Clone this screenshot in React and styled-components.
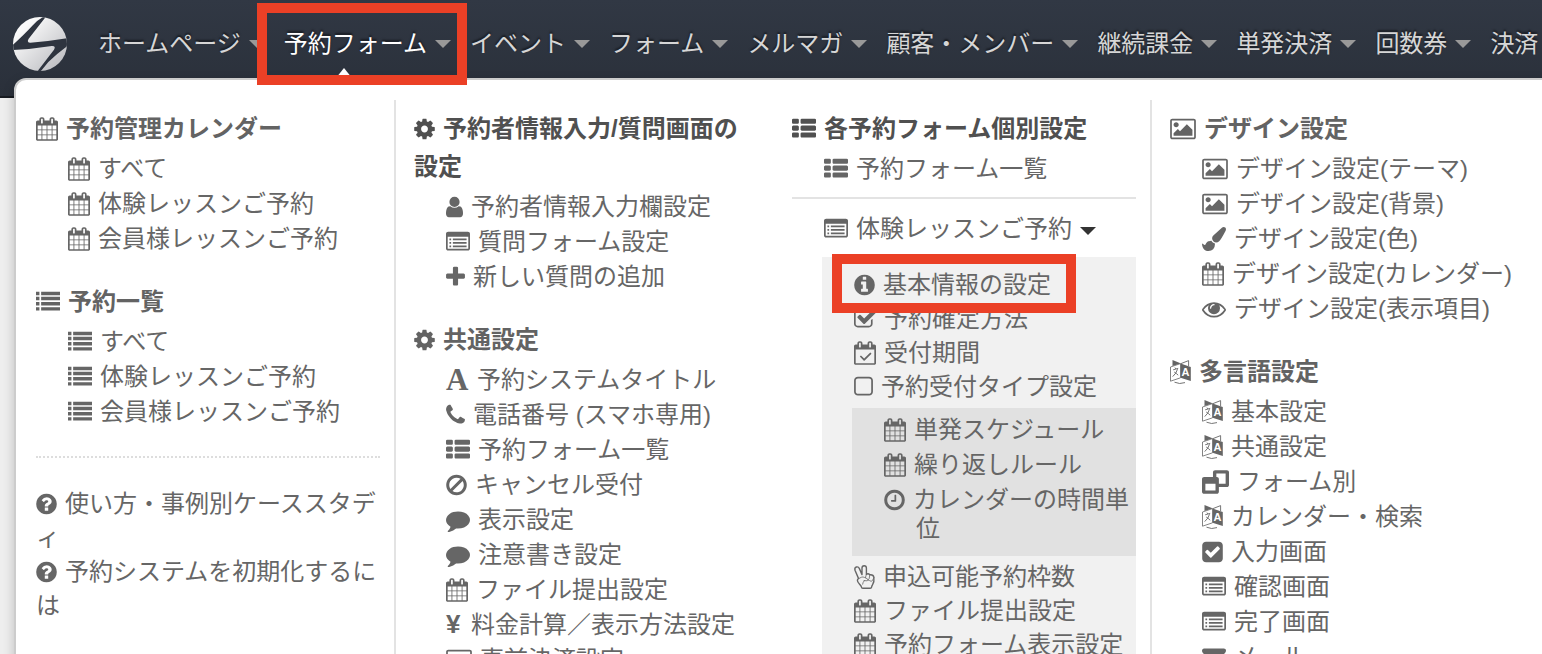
import React from "react";
import styled, { createGlobalStyle, css } from "styled-components";

const CIRCLE =
  "M1664 896q0 209-103 385.5t-279.5 279.5-385.5 103-385.5-103-279.5-279.5-103-385.5 103-385.5 279.5-279.5 385.5-103 385.5 103 279.5 279.5 103 385.5z";
const CALENDAR_FRAME =
  "M1728 384v1280q0 52-38 90t-90 38h-1408q-52 0-90-38t-38-90v-1280q0-52 38-90t90-38h128v-96q0-66 47-113t113-47h64q66 0 113 47t47 113v96h384v-96q0-66 47-113t113-47h64q66 0 113 47t47 113v96h128q52 0 90 38t38 90z";
const CALENDAR_RINGS =
  "M576 448v-288q0-13-9.5-22.5t-22.5-9.5h-64q-13 0-22.5 9.5t-9.5 22.5v288q0 13 9.5 22.5t22.5 9.5h64q13 0 22.5-9.5t9.5-22.5zM1344 448v-288q0-13-9.5-22.5t-22.5-9.5h-64q-13 0-22.5 9.5t-9.5 22.5v288q0 13 9.5 22.5t22.5 9.5h64q13 0 22.5-9.5t9.5-22.5z";

// x: left edge of the glyph, w: advance width, both on a 1792 unit em
const glyphs = {
  calendar: {
    x: 64,
    w: 1664,
    d: `${CALENDAR_FRAME}${CALENDAR_RINGS}M192 1664h288v-288h-288zM544 1664h320v-288h-320zM928 1664h320v-288h-320zM1312 1664h288v-288h-288zM192 1312h288v-320h-288zM544 1312h320v-320h-320zM928 1312h320v-320h-320zM1312 1312h288v-320h-288zM192 928h288v-288h-288zM544 928h320v-288h-320zM928 928h320v-288h-320zM1312 928h288v-288h-288z`,
  },
  calendarCheck: {
    x: 64,
    w: 1664,
    d: `${CALENDAR_FRAME}${CALENDAR_RINGS}M192 1664h1408v-1024h-1408zM1367 964l-512 512q-10 9-23 9t-23-9l-288-288q-9-10-9-23t9-22l46-46q9-9 22-9t23 9l220 220 444-444q10-9 23-9t22 9l46 46q9 9 9 22t-9 23z`,
  },
  list: {
    x: 0,
    w: 1792,
    d: "M0 128h256v256H0zM384 128h1408v256H384zM0 512h256v256H0zM384 512h1408v256H384zM0 896h256v256H0zM384 896h1408v256H384zM0 1280h256v256H0zM384 1280h1408v256H384z",
  },
  thList: {
    x: 0,
    w: 1792,
    d: [128, 640, 1152]
      .map(
        (y) =>
          `M96 ${y}h320q40 0 68 28t28 68v192q0 40-28 68t-68 28h-320q-40 0-68-28t-28-68v-192q0-40 28-68t68-28zM736 ${y}h960q40 0 68 28t28 68v192q0 40-28 68t-68 28h-960q-40 0-68-28t-28-68v-192q0-40 28-68t68-28z`
      )
      .join(""),
  },
  listAlt: {
    x: 0,
    w: 1792,
    d: "M160 128h1472q66 0 113 47t47 113v1088q0 66-47 113t-113 47h-1472q-66 0-113-47t-47-113v-1088q0-66 47-113t113-47zM128 512v864q0 32 32 32h1472q32 0 32-32v-864zM256 640h128v128h-128zM512 640h1024v128h-1024zM256 896h128v128h-128zM512 896h1024v128h-1024zM256 1152h128v128h-128zM512 1152h1024v128h-1024z",
  },
  card: {
    x: 0,
    w: 1920,
    d: "M160 128h1600q66 0 113 47t47 113v1216q0 66-47 113t-113 47h-1600q-66 0-113-47t-47-113v-1216q0-66 47-113t113-47zM128 512h1664v-224q0-32-32-32h-1600q-32 0-32 32zM128 896v608q0 32 32 32h1600q32 0 32-32v-608z",
  },
  cog: {
    x: 128,
    w: 1536,
    d: "M1152 896q0-106-75-181t-181-75-181 75-75 181 75 181 181 75 181-75 75-181zm512-109v222q0 12-8 23t-20 13l-185 28q-19 54-39 91 35 50 107 138 10 12 10 25t-9 23q-27 37-99 108t-94 71q-12 0-26-9l-138-108q-44 23-91 38-16 136-29 186-7 28-36 28h-222q-14 0-24.5-8.5t-11.5-21.5l-28-184q-49-16-90-37l-141 107q-10 9-25 9-14 0-25-11-126-114-165-168-7-10-7-23 0-12 8-23 15-21 51-66.5t54-70.5q-27-50-41-99l-183-27q-13-2-21-12.5t-8-23.5v-222q0-12 8-23t19-13l186-28q14-46 39-92-40-57-107-138-10-12-10-24 0-10 9-23 26-36 98.5-107.5t94.5-71.5q13 0 26 10l138 107q44-23 91-38 16-136 29-186 7-28 36-28h222q14 0 24.5 8.5t11.5 21.5l28 184q49 16 90 37l142-107q9-9 24-9 13 0 25 10 129 119 165 170 7 8 7 22 0 12-8 23-15 21-51 66.5t-54 70.5q26 50 41 98l183 28q13 2 21 12.5t8 23.5z",
  },
  question: {
    x: 128,
    w: 1536,
    d: `${CIRCLE}M1024 1376v-192q0-14-9-23t-23-9h-192q-14 0-23 9t-9 23v192q0 14 9 23t23 9h192q14 0 23-9t9-23zm256-672q0-88-55.5-163t-138.5-116-170-41q-243 0-371 213-15 24 8 42l132 100q7 6 19 6 16 0 25-12 53-68 86-92 34-24 86-24 48 0 85.5 26t37.5 59q0 38-20 61t-68 45q-63 28-115.5 86.5t-52.5 125.5v36q0 14 9 23t23 9h192q14 0 23-9t9-23q0-19 21.5-49.5t54.5-49.5q32-18 49-28.5t46-35 44.5-48 28-60.5 12.5-81z`,
  },
  info: {
    x: 128,
    w: 1536,
    d: `${CIRCLE}M1152 1376v-160q0-14-9-23t-23-9h-96v-512q0-14-9-23t-23-9h-320q-14 0-23 9t-9 23v160q0 14 9 23t23 9h96v320h-96q-14 0-23 9t-9 23v160q0 14 9 23t23 9h448q14 0 23-9t9-23zm-128-896v-160q0-14-9-23t-23-9h-192q-14 0-23 9t-9 23v160q0 14 9 23t23 9h192q14 0 23-9t9-23z`,
  },
  clock: {
    x: 128,
    w: 1536,
    d: `${CIRCLE}M1440 896q0-148-73-273t-198-198-273-73-273 73-198 198-73 273 73 273 198 198 273 73 273-73 198-198 73-273zM1024 544v448q0 14-9 23t-23 9h-320q-14 0-23-9t-9-23v-64q0-14 9-23t23-9h224v-352q0-14 9-23t23-9h64q14 0 23 9t9 23z`,
  },
  user: {
    x: 256,
    w: 1280,
    d: "M1536 1399q0 109-62.5 187t-150.5 78h-854q-88 0-150.5-78t-62.5-187q0-85 8.5-160.5t31.5-152 58.5-131 94-89 134.5-34.5q131 128 313 128t313-128q76 0 134.5 34.5t94 89 58.5 131 31.5 152 8.5 160.5zM1280 512q0 159-112.5 271.5t-271.5 112.5-271.5-112.5-112.5-271.5 112.5-271.5 271.5-112.5 271.5 112.5 112.5 271.5z",
    solid: true,
  },
  plus: {
    x: 192,
    w: 1408,
    d: "M1600 736v192q0 40-28 68t-68 28h-416v416q0 40-28 68t-68 28h-192q-40 0-68-28t-28-68v-416h-416q-40 0-68-28t-28-68v-192q0-40 28-68t68-28h416v-416q0-40 28-68t68-28h192q40 0 68 28t28 68v416h416q40 0 68 28t28 68z",
  },
  phone: {
    x: 192,
    w: 1408,
    d: "M1600 1240q0 27-10 70.5t-21 68.5q-21 50-122 106-94 51-186 51-27 0-53-3.5t-57.5-12.5-47-14.5-55.5-20.5-49-18q-98-35-175-83-127-79-264-216t-216-264q-48-77-83-175-3-9-18-49t-20.5-55.5-14.5-47-12.5-57.5-3.5-53q0-92 51-186 56-101 106-122 25-11 68.5-21t70.5-10q14 0 21 3 18 6 53 76 11 19 30 54t35 63.5 31 53.5q3 4 17.5 25t21.5 35.5 7 28.5q0 20-28.5 50t-62 55-62 53-28.5 46q0 9 5 22.5t8.5 20.5 14 24 11.5 19q76 137 174 235t235 174q2 1 19 11.5t24 14 20.5 8.5 22.5 5q18 0 46-28.5t53-62 55-62 50-28.5q14 0 28.5 7t35.5 21.5 25 17.5q25 15 53.5 31t63.5 35 54 30q70 35 76 53 3 7 3 21z",
  },
  ban: {
    x: 128,
    w: 1536,
    d: "M1440 893q0-161-87-295l-754 753q137 89 297 89 111 0 211.5-43.5t173.5-116.5 116-174.5 43-212.5zm-999 299l755-754q-135-91-300-91-148 0-273 73t-198 199-73 274q0 162 89 299zm1223-299q0 157-61 300t-163.5 246-245 164-298.5 61-298.5-61-245-164-163.5-246-61-300 61-299.5 163.5-245.5 245-164 298.5-61 298.5 61 245 164 163.5 245.5 61 299.5z",
  },
  comment: {
    x: 0,
    w: 1792,
    d: "M1792 896q0 174-120 321.5t-326 233-450 85.5q-70 0-145-8-198 175-460 242-49 14-114 22-17 2-30.5-9t-17.5-29v-1q-3-4-.5-12t2-10 4.5-9.5l6-9 7-8.5 8-9q7-8 31-34.5t34.5-38 31-39.5 32.5-51 27-59 26-76q-157-89-247.5-220t-90.5-281q0-130 71-248.5t191-204.5 286-136.5 348-50.5q244 0 450 85.5t326 233 120 321.5z",
  },
  checkSquareO: {
    x: 192,
    w: 1664,
    d: "M1600 930v318q0 119-84.5 203.5t-203.5 84.5h-832q-119 0-203.5-84.5t-84.5-203.5v-832q0-119 84.5-203.5t203.5-84.5h832q63 0 117 25 15 7 18 23 3 17-9 29l-49 49q-10 10-23 10-3 0-9-2-23-6-45-6h-832q-66 0-113 47t-47 113v832q0 66 47 113t113 47h832q66 0 113-47t47-113v-254q0-13 9-22l64-64q10-10 23-10 6 0 12 3 20 8 20 29zm231-489l-814 814q-24 24-57 24t-57-24l-430-430q-24-24-24-57t24-57l110-110q24-24 57-24t57 24l263 263 647-647q24-24 57-24t57 24l110 110q24 24 24 57t-24 57z",
  },
  squareO: {
    x: 192,
    w: 1408,
    d: "M1312 256h-832q-66 0-113 47t-47 113v832q0 66 47 113t113 47h832q66 0 113-47t47-113v-832q0-66-47-113t-113-47zm288 160v832q0 119-84.5 203.5t-203.5 84.5h-832q-119 0-203.5-84.5t-84.5-203.5v-832q0-119 84.5-203.5t203.5-84.5h832q119 0 203.5 84.5t84.5 203.5z",
  },
  checkSquare: {
    x: 128,
    w: 1536,
    d: "M813 1299l614-614q19-19 19-45t-19-45l-102-102q-19-19-45-19t-45 19l-467 467-211-211q-19-19-45-19t-45 19l-102 102q-19 19-19 45t19 45l358 358q19 19 45 19t45-19zm851-883v960q0 119-84.5 203.5t-203.5 84.5h-960q-119 0-203.5-84.5t-84.5-203.5v-960q0-119 84.5-203.5t203.5-84.5h960q119 0 203.5 84.5t84.5 203.5z",
  },
  picture: {
    x: -64,
    w: 1920,
    d: "M576 576q0 80-56 136t-136 56-136-56-56-136 56-136 136-56 136 56 56 136zm1024 384v448h-1408v-192l320-320 160 160 512-512zm96-704h-1600q-13 0-22.5 9.5t-9.5 22.5v1216q0 13 9.5 22.5t22.5 9.5h1600q13 0 22.5-9.5t9.5-22.5v-1216q0-13-9.5-22.5t-22.5-9.5zm160 32v1216q0 66-47 113t-113 47h-1600q-66 0-113-47t-47-113v-1216q0-66 47-113t113-47h1600q66 0 113 47t47 113z",
  },
  brush: {
    x: 0,
    w: 1792,
    d: "M1615 0q70 0 122.5 46.5t52.5 116.5q0 63-45 151-332 629-465 752-97 91-218 91-126 0-216.5-92.5t-90.5-219.5q0-128 92-212l638-579q59-54 130-54zm-909 1034q39 76 106.5 130t150.5 76l1 71q4 213-129.5 347t-348.5 134q-123 0-218-46.5t-152.5-127.5-86.5-183-29-220q7 5 41 30t62 44.5 59 36.5 46 17q41 0 55-37 25-66 57.5-112.5t69.5-76 88-47.5 103-25.5 125-10.5z",
  },
  eye: {
    x: 0,
    w: 1792,
    d: "M1664 960q-152-236-381-353 61 104 61 225 0 185-131.5 316.5t-316.5 131.5-316.5-131.5-131.5-316.5q0-121 61-225-229 117-381 353 133 205 333.5 326.5t434.5 121.5 434.5-121.5 333.5-326.5zm-720-384q0-20-14-34t-34-14q-125 0-214.5 89.5t-89.5 214.5q0 20 14 34t34 14 34-14 14-34q0-86 61-147t147-61q20 0 34-14t14-34zm848 384q0 34-20 69-140 230-376.5 368.5t-499.5 138.5-499.5-139-376.5-368q-20-35-20-69t20-69q140-229 376.5-368t499.5-139 499.5 139 376.5 368q20 35 20 69z",
  },
  windows: {
    x: 0,
    w: 2048,
    d: "M160 512h672v-352q0-66 47-113t113-47h896q66 0 113 47t47 113v960q0 66-47 113t-113 47h-608v352q0 66-47 113t-113 47h-960q-66 0-113-47t-47-113v-960q0-66 47-113t113-47zM256 1024v512h768v-512zM1088 256v256h32q66 0 113 47t47 113v352h512v-768z",
  },
  envelope: {
    x: 0,
    w: 1792,
    d: "M1792 710v794q0 66-47 113t-113 47h-1472q-66 0-113-47t-47-113v-794q44 49 101 87 362 246 497 345 57 42 92.5 65.5t94.5 48 110 24.5h2q51 0 110-24.5t94.5-48 92.5-65.5q170-123 498-345 57-39 100-87zm0-294q0 79-49 151t-122 123q-376 261-468 325-10 7-42.5 31t-54 38.5-52 32.5-57.5 27-50 9h-2q-23 0-50-9t-57.5-27-52-32.5-54-38.5-42.5-31q-91-64-262-182.5t-205-142.5q-62-42-117-115.5t-55-136.5q0-78 41.5-130t118.5-52h1472q65 0 112.5 47t47.5 113z",
  },
};

const IconSvg = styled.svg`
  height: 24px;
  margin-right: 8px;
  vertical-align: -4px;
  overflow: visible;
  fill: currentColor;
`;

const SerifIcon = styled.span`
  display: inline-block;
  width: 22px;
  margin-right: 9px;
  font: bold 31px/29px "Liberation Serif", serif;
  text-indent: 0;
  vertical-align: -2px;
`;

const YenIcon = styled.span`
  display: inline-block;
  width: 14px;
  margin-right: 11px;
  font: bold 26px/29px "Liberation Sans", sans-serif;
  text-indent: 0;
`;

const HandIcon = () => (
  <IconSvg width="21" viewBox="0 0 21 24" aria-hidden="true">
    <g
      fill="none"
      stroke="currentColor"
      strokeWidth="1.4"
      strokeLinejoin="round"
      strokeLinecap="round"
    >
      <path d="M4.6 13.6 1 5.2Q.3 2.8 2.3 2 4.4 1.4 5.4 3.6L8 9.6V3Q8 .8 10.2 .8T12.4 3V9.4Q14.2 8 15.8 9.8 19.4 9.4 19.9 12.4 20.4 17 18.6 19.6 17.6 21 17.6 22.2 17.4 23.3 16.2 23.3H8.8Q7.6 23.3 7.4 22 7.4 21 5.6 19.2 3.4 17 3.4 15.2 3.6 13.8 4.6 13.6z" />
      <path
        d="M4.6 13.6 7.6 12.2Q9 11.6 10.4 12.4L13.4 13.8Q14.8 15 13.2 15.8L10 15.6M8.6 19.2Q8.8 17 10.4 15.6M12.4 9.4 11.4 12.6M15.8 9.8 15.2 13.6Q14.8 14.8 14 14.6M19.8 12.8 18.4 15.6Q17.2 17 15.6 15.6L14.4 15.2"
        strokeWidth=".8"
      />
    </g>
  </IconSvg>
);

const LanguageIcon = () => (
  <IconSvg width="21" viewBox="0 0 21 24" aria-hidden="true">
    <path d="M10.5 3.6 20.8 7v14L10.5 17.8z" />
    <path d="M2.5 0v6l8.5-2.4z" />
    <path
      d="M.5 7 10.5 3.6v14.2L.5 21.2z"
      fill="#ffffff"
      stroke="currentColor"
      strokeWidth=".8"
    />
    <path
      d="M11 3.6 18.6.6V6M4.5 22.2q5 2.4 10.5.4M3.2 9.8l5-1.4M5 7.6l1 1.4M7.5 9.2q-1 4-4.8 7.4M4.2 12q2 1.2 4 3.2"
      fill="none"
      stroke="currentColor"
      strokeWidth=".9"
    />
    <IconLetter x="11.4" y="16.4">
      A
    </IconLetter>
  </IconSvg>
);

const Icon = ({ name }) => {
  if (name === "language") return <LanguageIcon />;
  if (name === "hand") return <HandIcon />;
  if (name === "font") return <SerifIcon aria-hidden="true">A</SerifIcon>;
  if (name === "yen") return <YenIcon aria-hidden="true">¥</YenIcon>;
  const { x, w, d, solid } = glyphs[name];
  return (
    <IconSvg
      width={Math.round((w * 24) / 1792)}
      viewBox={`${x} 0 ${w} 1792`}
      aria-hidden="true"
    >
      <path d={d} fillRule={solid ? "nonzero" : "evenodd"} />
    </IconSvg>
  );
};

const navItems = [
  "ホームページ",
  "予約フォーム",
  "イベント",
  "フォーム",
  "メルマガ",
  "顧客・メンバー",
  "継続課金",
  "単発決済",
  "回数券",
  "決済",
];

const calendarMenu = [
  ["calendar", "すべて"],
  ["calendar", "体験レッスンご予約"],
  ["calendar", "会員様レッスンご予約"],
];

const bookingMenu = [
  ["list", "すべて"],
  ["list", "体験レッスンご予約"],
  ["list", "会員様レッスンご予約"],
];

const questionMenu = [
  ["user", "予約者情報入力欄設定"],
  ["listAlt", "質問フォーム設定"],
  ["plus", "新しい質問の追加"],
];

const commonMenu = [
  ["font", "予約システムタイトル"],
  ["phone", "電話番号 (スマホ専用)"],
  ["thList", "予約フォーム一覧"],
  ["ban", "キャンセル受付"],
  ["comment", "表示設定"],
  ["comment", "注意書き設定"],
  ["calendar", "ファイル提出設定"],
  ["yen", "料金計算／表示方法設定"],
  ["card", "事前決済設定"],
];

const scheduleMenu = [
  ["calendar", "単発スケジュール"],
  ["calendar", "繰り返しルール"],
  ["clock", "カレンダーの時間単位"],
];

const designMenu = [
  ["picture", "デザイン設定(テーマ)"],
  ["picture", "デザイン設定(背景)"],
  ["brush", "デザイン設定(色)"],
  ["calendar", "デザイン設定(カレンダー)"],
  ["eye", "デザイン設定(表示項目)"],
];

const languageMenu = [
  ["language", "基本設定"],
  ["language", "共通設定"],
  ["windows", "フォーム別"],
  ["language", "カレンダー・検索"],
  ["checkSquare", "入力画面"],
  ["listAlt", "確認画面"],
  ["listAlt", "完了画面"],
  ["envelope", "メール"],
];

const MenuItem = ({ icon, children, tight, marked }) => (
  <Item $tight={tight}>
    <MenuLink href="#">
      <Icon name={icon} />
      {children}
    </MenuLink>
    {marked && <ItemMark />}
  </Item>
);

const Menu = ({ items }) => (
  <ul>
    {items.map(([icon, label], index) => (
      <MenuItem key={index} icon={icon}>
        {label}
      </MenuItem>
    ))}
  </ul>
);

const Section = ({ icon, title, items, dark }) => (
  <Group>
    <Heading $dark={dark}>
      <Icon name={icon} />
      {title}
    </Heading>
    <Menu items={items} />
  </Group>
);

const Logo = () => (
  <LogoLink href="#" aria-label="ホーム">
    <svg width="54" height="54" viewBox="0 0 162 162" aria-hidden="true">
      <defs>
        <linearGradient id="metal" x1="0" y1="0" x2="1" y2="1">
          <stop offset="0.2" stopColor="#fafafa" />
          <stop offset="1" stopColor="#b4b5ba" />
        </linearGradient>
        <clipPath id="disc">
          <circle cx="81" cy="81" r="81" />
        </clipPath>
      </defs>
      <g clipPath="url(#disc)">
        <rect width="162" height="162" fill="url(#metal)" />
        <path
          d="M90 0Q72 10 58 26 34 52 0 83V99Q60 96 116 87 130 86 123 98L74 162H84L106 135Q130 112 162 88V64Q110 73 52 77 40 76 47 65L98 0z"
          fill="#2e343f"
        />
      </g>
    </svg>
  </LogoLink>
);

const App = () => (
  <Page>
    <GlobalStyle />
    <Header>
      <Logo />
      <Nav>
        {navItems.map((label, index) => (
          <NavItem key={label}>
            <NavLink href="#" $active={index === 1}>
              {label}
            </NavLink>
            <Caret />
            {index === 1 && (
              <>
                <Pointer />
                <NavMark />
              </>
            )}
          </NavItem>
        ))}
      </Nav>
    </Header>
    <Panel>
      <Column $divided>
        <Section icon="calendar" title="予約管理カレンダー" items={calendarMenu} />
        <Section icon="list" title="予約一覧" items={bookingMenu} />
        <Help>
          <HelpLink href="#">
            <Icon name="question" />
            使い方・事例別ケーススタディ
          </HelpLink>
          <HelpLink href="#">
            <Icon name="question" />
            予約システムを初期化するには
          </HelpLink>
        </Help>
      </Column>
      <Column>
        <Section
          icon="cog"
          title="予約者情報入力/質問画面の設定"
          items={questionMenu}
          dark
        />
        <Section icon="cog" title="共通設定" items={commonMenu} />
      </Column>
      <Column $divided>
        <Heading $dark>
          <Icon name="thList" />
          各予約フォーム個別設定
        </Heading>
        <ul>
          <MenuItem icon="thList">予約フォーム一覧</MenuItem>
        </ul>
        <Rule />
        <ul>
          <MenuItem icon="listAlt">
            体験レッスンご予約
            <Caret $dark />
          </MenuItem>
        </ul>
        <SubMenu>
          <MenuItem icon="info" tight marked>
            基本情報の設定
          </MenuItem>
          <MenuItem icon="checkSquareO" tight>
            予約確定方法
          </MenuItem>
          <MenuItem icon="calendarCheck" tight>
            受付期間
          </MenuItem>
          <MenuItem icon="squareO" tight>
            予約受付タイプ設定
          </MenuItem>
          <SubMenuGroup>
            <Nested>
              {scheduleMenu.map(([icon, label]) => (
                <MenuItem key={label} icon={icon}>
                  {label}
                </MenuItem>
              ))}
            </Nested>
          </SubMenuGroup>
          <MenuItem icon="hand" tight>
            申込可能予約枠数
          </MenuItem>
          <MenuItem icon="calendar" tight>
            ファイル提出設定
          </MenuItem>
          <MenuItem icon="calendar" tight>
            予約フォーム表示設定
          </MenuItem>
        </SubMenu>
      </Column>
      <Column>
        <Section icon="picture" title="デザイン設定" items={designMenu} />
        <Section icon="language" title="多言語設定" items={languageMenu} />
      </Column>
    </Panel>
  </Page>
);

const GlobalStyle = createGlobalStyle`
  * {
    box-sizing: border-box;
  }

  body {
    margin: 0;
    background: #eeeeee;
    color: #666666;
    font-family: "Liberation Sans", "Noto Sans CJK JP", sans-serif;
    font-size: 24px;
  }

  a {
    color: inherit;
    text-decoration: none;
  }

  ul {
    margin: 0;
    padding: 0;
    list-style: none;
  }
`;

const Page = styled.div`
  position: relative;
  height: 100vh;
  overflow: hidden;
`;

const Header = styled.header`
  display: flex;
  align-items: flex-start;
  height: 98px;
  padding-left: 13px;
  border-bottom: 2px solid #171b21;
  background: linear-gradient(#313844, #2a303a);
`;

const LogoLink = styled.a`
  flex: none;
  height: 54px;
  margin: 17px 31px 0 0;
`;

const Nav = styled.ul`
  display: flex;
  gap: 19px;
`;

const NavItem = styled.li`
  position: relative;
  display: flex;
  align-items: center;
  flex: none;
  height: 88px;
`;

const NavLink = styled.a`
  padding-bottom: 6px;
  color: ${({ $active }) => ($active ? "#ffffff" : "#d6d6d6")};
  text-shadow: 0 -2px 2px rgba(0, 0, 0, 0.5);
  white-space: nowrap;
`;

const Caret = styled.span`
  display: inline-block;
  margin-left: 8px;
  border: 8px solid transparent;
  border-top-color: ${({ $dark }) => ($dark ? "#333333" : "#999999")};
  border-bottom: 0;
  vertical-align: 2px;
`;

const Pointer = styled.span`
  position: absolute;
  top: 68px;
  left: 50%;
  margin-left: -31px;
  border: 10px solid transparent;
  border-top: 0;
  border-right-width: 8px;
  border-bottom-color: #ffffff;
  border-left-width: 8px;
`;

const Mark = styled.span`
  position: absolute;
  z-index: 2;
  border: 10px solid #eb4026;
  pointer-events: none;
`;

const NavMark = styled(Mark)`
  top: 3px;
  left: -27px;
  width: 210px;
  height: 82px;
`;

const ItemMark = styled(Mark)`
  top: -13px;
  left: 10px;
  width: 244px;
  height: 59px;
`;

const Panel = styled.div`
  position: absolute;
  top: 78px;
  right: -2px;
  left: 14px;
  display: grid;
  grid-template-columns: repeat(4, 1fr);
  padding: 20px 12px 20px 2px;
  border: 2px solid #cccccc;
  border-radius: 12px 0 0 12px;
  background: #ffffff;
  box-shadow: 0 4px 12px rgba(0, 0, 0, 0.2);
`;

const Column = styled.div`
  min-width: 0;
  padding: 10px 14px 0 18px;
  ${({ $divided }) =>
    $divided &&
    css`
      border-right: 2px solid #e3e3e3;
    `}
`;

const Group = styled.section`
  margin-bottom: 27px;
`;

const Heading = styled.h2`
  margin: 0 0 3px;
  color: ${({ $dark }) => ($dark ? "#505050" : "#636363")};
  font-size: 24px;
  line-height: 38px;
`;

const Item = styled.li`
  position: relative;
  padding: ${({ $tight }) => ($tight ? "3px 0 2px 64px" : "3px 0 3px 64px")};
  line-height: 29px;
  text-indent: -32px;
`;

const MenuLink = styled.a`
  &:hover {
    color: #333333;
  }
`;

const IconLetter = styled.text`
  fill: #ffffff;
  font: bold 11px "Liberation Sans", sans-serif;
  text-indent: 0;
`;

const Help = styled.div`
  padding-top: 29px;
  border-top: 2px dotted #dddddd;
  line-height: 34px;
`;

const HelpLink = styled.a`
  display: block;
`;

const Rule = styled.hr`
  margin: 11px 0 12px;
  border: 0;
  border-top: 2px solid #e3e3e3;
`;

const SubMenu = styled.ul`
  margin: 11px 0 0 30px;
  padding: 10px 0;
  background: #f1f1f1;
`;

const SubMenuGroup = styled.li`
  margin: 5px 0 3px 30px;
`;

const Nested = styled.ul`
  padding: 4px 0 10px;
  background: #e1e1e1;
`;

export default App;
